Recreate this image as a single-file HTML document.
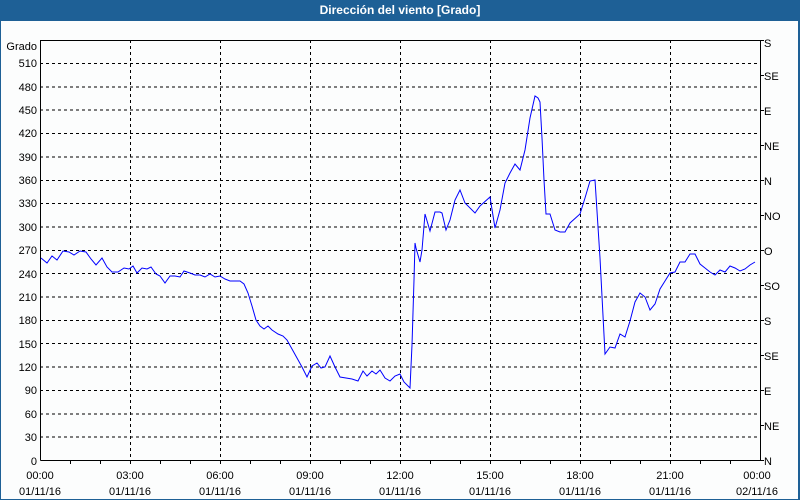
<!DOCTYPE html>
<html><head><meta charset="utf-8"><style>
html,body{margin:0;padding:0;width:800px;height:500px;overflow:hidden;background:#fff}
svg{display:block}
text{font-family:"Liberation Sans",sans-serif;font-size:11px;fill:#000}
</style></head><body>
<svg width="800" height="500" xmlns="http://www.w3.org/2000/svg">
<rect x="0" y="0" width="800" height="500" fill="#1e6096"/>
<rect x="1" y="21" width="797" height="478" fill="#fcfdfd"/>
<text x="400" y="14" text-anchor="middle" style="fill:#fff;font-weight:bold;font-size:12px">Dirección del viento [Grado]</text>
<g stroke="#000" stroke-width="1" stroke-dasharray="3,3" shape-rendering="crispEdges">
<path d="M40 63.5H760M40 86.9H760M40 110.2H760M40 133.6H760M40 156.9H760M40 180.3H760M40 203.6H760M40 227H760M40 250.3H760M40 273.7H760M40 297H760M40 320.4H760M40 343.7H760M40 367.1H760M40 390.4H760M40 413.8H760M40 437.1H760"/>
<path d="M130.5 40V460M220.5 40V460M310.5 40V460M400.5 40V460M490.5 40V460M580.5 40V460M670.5 40V460"/>
</g>
<g stroke="#000" stroke-width="1" fill="none" shape-rendering="crispEdges">
<path d="M40.5 460.5V40.5H760.5V460.5H40.5"/>
<path d="M70.5 461V464M100.5 461V464M130.5 461V464M160.5 461V464M190.5 461V464M220.5 461V464M250.5 461V464M280.5 461V464M310.5 461V464M340.5 461V464M370.5 461V464M400.5 461V464M430.5 461V464M460.5 461V464M490.5 461V464M520.5 461V464M550.5 461V464M580.5 461V464M610.5 461V464M640.5 461V464M670.5 461V464M700.5 461V464M730.5 461V464"/>
<path d="M760 40.5H764M760 75.5H764M760 110.5H764M760 145.5H764M760 180.5H764M760 215.5H764M760 250.5H764M760 285.5H764M760 320.5H764M760 355.5H764M760 390.5H764M760 425.5H764M760 460.5H764"/>
</g>
<g text-anchor="end">
<text x="37" y="50">Grado</text>
<text x="37" y="67">510</text><text x="37" y="91">480</text><text x="37" y="114">450</text><text x="37" y="137">420</text><text x="37" y="161">390</text><text x="37" y="184">360</text><text x="37" y="207">330</text><text x="37" y="231">300</text><text x="37" y="254">270</text><text x="37" y="278">240</text><text x="37" y="301">210</text><text x="37" y="324">180</text><text x="37" y="348">150</text><text x="37" y="371">120</text><text x="37" y="394">90</text><text x="37" y="418">60</text><text x="37" y="441">30</text><text x="37" y="465">0</text>
</g>
<g>
<text x="764" y="47">S</text><text x="764" y="80">SE</text><text x="764" y="115">E</text><text x="764" y="150">NE</text><text x="764" y="185">N</text><text x="764" y="220">NO</text><text x="764" y="255">O</text><text x="764" y="290">SO</text><text x="764" y="325">S</text><text x="764" y="360">SE</text><text x="764" y="395">E</text><text x="764" y="430">NE</text><text x="764" y="465">N</text>
</g>
<g text-anchor="middle">
<text x="40" y="479">00:00</text><text x="40" y="495">01/11/16</text>
<text x="130" y="479">03:00</text><text x="130" y="495">01/11/16</text>
<text x="220" y="479">06:00</text><text x="220" y="495">01/11/16</text>
<text x="310" y="479">09:00</text><text x="310" y="495">01/11/16</text>
<text x="400" y="479">12:00</text><text x="400" y="495">01/11/16</text>
<text x="490" y="479">15:00</text><text x="490" y="495">01/11/16</text>
<text x="580" y="479">18:00</text><text x="580" y="495">01/11/16</text>
<text x="670" y="479">21:00</text><text x="670" y="495">01/11/16</text>
<text x="757" y="479">00:00</text><text x="757" y="495">02/11/16</text>
</g>
<polyline fill="none" stroke="#0000ff" stroke-width="1" points="41,258 47,263 52,256 57,260 63,251 69,252 74,255 80,251 86,252 91,259 96,265 102,258 107,267 112,272 118,272 124,268 129,269 133,266 137,273 142,268 147,269 151,267 156,274 160,276 165,283 170,276 175,276 180,277 184,271 190,273 195,275 200,275 205,277 210,274 215,277 220,276 225,279 230,281 240,281 244,284 248,293 252,306 256,320 260,326 264,329 268,326 272,330 278,334 283,336 287,340 292,349 297,358 302,367 307,377 312,366 317,363 321,368 325,367 330,356 335,367 340,377 346,378 352,379 358,381 363,371 367,376 372,371 376,374 380,370 385,378 390,381 395,376 400,374 404,382 410,388 412,345 414,280 415,243 416,248 420,262 422,250 423,238 425,214 430,231 435,212 440,212 442,213 446,230 450,220 455,200 460,190 465,203 475,213 480,206 490,197 495,228 500,210 505,183 510,173 515,164 520,170 525,150 530,118 535,96 538,98 540,102 542,138 544,180 546,214 550,214 555,230 560,232 565,232 570,223 580,214 585,198 590,181 595,180 600,258 605,354 610,347 615,348 620,334 625,337 630,321 635,302 640,293 645,297 650,310 655,304 660,289 665,281 670,273 675,272 680,262 685,262 690,254 695,254 700,264 705,268 710,272 715,275 720,270 725,272 730,266 735,268 740,271 745,269 750,265 755,262"/>
</svg>
</body></html>
